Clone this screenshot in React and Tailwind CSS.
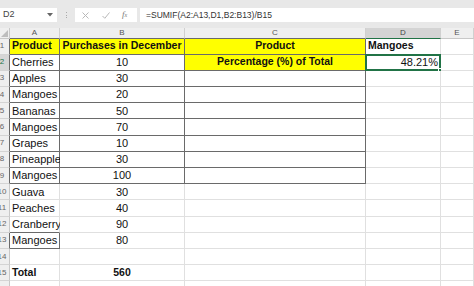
const COLS = [
  { key: 'A', w: 'w-[50px]' },
  { key: 'B', w: 'w-[125px]' },
  { key: 'C', w: 'w-[181px]' },
  { key: 'D', w: 'w-[75px]' },
  { key: 'E', w: 'w-[33px]' },
]

const ROWS = [
  { A: 'Product', B: 'Purchases in December', C: 'Product', D: 'Mangoes' },
  { A: 'Cherries', B: '10', C: 'Percentage (%) of Total', D: '48.21%' },
  { A: 'Apples', B: '30' },
  { A: 'Mangoes', B: '20' },
  { A: 'Bananas', B: '50' },
  { A: 'Mangoes', B: '70' },
  { A: 'Grapes', B: '10' },
  { A: 'Pineapple', B: '30' },
  { A: 'Mangoes', B: '100' },
  { A: 'Guava', B: '30' },
  { A: 'Peaches', B: '40' },
  { A: 'Cranberry', B: '90' },
  { A: 'Mangoes', B: '80' },
  {},
  { A: 'Total', B: '560' },
  {},
]

// cells that carry the dark outline
const boxed = (r, c) => (r >= 1 && r <= 9 && ['A', 'B', 'C'].includes(c)) || (r === 13 && c === 'A')
const yellow = (r, c) => (r === 1 && ['A', 'B', 'C'].includes(c)) || (r === 2 && c === 'C')

function Cell({ r, c, w, value }) {
  const next = COLS[COLS.findIndex((x) => x.key === c) + 1]
  const darkR = boxed(r, c) || (next && boxed(r, next.key))
  const darkB = boxed(r, c) || boxed(r + 1, c)
  const bold = r === 1 || r === 15 || (r === 2 && c === 'C')
  const align =
    c === 'B' || c === 'C' ? 'justify-center' : r === 2 && c === 'D' ? 'justify-end' : 'justify-start'
  return (
    <div
      className={`relative ${w} shrink-0 h-[16.2px] flex items-center px-[2px] border-r border-b whitespace-nowrap overflow-visible ${
        darkR ? 'border-r-[#6a6a6a]' : 'border-r-[#e0e0e0]'
      } ${darkB ? 'border-b-[#6a6a6a]' : 'border-b-[#e0e0e0]'} ${yellow(r, c) ? 'bg-[#ffff00]' : 'bg-white'} ${align} ${
        bold ? 'font-bold text-[10.5px]' : 'text-[11px]'
      } text-[#111]`}
    >
      {value}
      {r === 2 && c === 'D' && (
        <>
          <span className="absolute -left-[1px] -top-[1px] -right-[1px] -bottom-[1px] border-2 border-[#217346] pointer-events-none" />
          <span className="absolute -right-[3px] -bottom-[3px] w-[5px] h-[5px] bg-[#217346] border border-white" />
        </>
      )}
    </div>
  )
}

function RowHeader({ n }) {
  const dark = n <= 9 || n === 13
  const active = n === 2
  return (
    <div
      className={`w-[10px] shrink-0 h-[16.2px] overflow-hidden border-b border-b-[#d4d4d4] border-r ${
        dark ? 'border-r-[#6a6a6a]' : 'border-r-[#c8c8c8]'
      } ${active ? 'bg-[#d6d6d6] text-[#217346]' : 'bg-[#efefef] text-[#666]'} flex items-center`}
    >
      <div className="w-[20px] -ml-[8px] shrink-0 text-center text-[8px] leading-none">{n}</div>
    </div>
  )
}

export default function App() {
  return (
    <div className="w-[474px] h-[286px] overflow-hidden bg-white" style={{ fontFamily: '"Liberation Sans", Arial, sans-serif' }}>
      {/* formula bar */}
      <div className="h-[28px] bg-[#e8e8e8] pt-[8px]">
        <div className="h-[14px] flex items-stretch">
          <div className="w-[57px] bg-white flex items-center justify-between pl-[3px] pr-[4px] text-[9px] text-[#444]">
            <span>D2</span>
            <svg width="6" height="4" viewBox="0 0 6 4"><path d="M0 0h6L3 3.5z" fill="#666" /></svg>
          </div>
          <div className="w-[18px] flex flex-col items-center justify-center gap-[1.5px]">
            <span className="w-[1px] h-[1px] bg-[#aaa]" />
            <span className="w-[1px] h-[1px] bg-[#aaa]" />
            <span className="w-[1px] h-[1px] bg-[#aaa]" />
          </div>
          <div className="w-[62px] bg-white flex items-center">
            <svg className="ml-[7px]" width="7" height="7" viewBox="0 0 7 7" stroke="#b8b8b8" strokeWidth="1">
              <path d="M0.5 0.5l6 6M6.5 0.5l-6 6" />
            </svg>
            <svg className="ml-[13px]" width="8" height="7" viewBox="0 0 8 7" fill="none" stroke="#b8b8b8" strokeWidth="1">
              <path d="M0.5 4l2.3 2.3L7.5 0.5" />
            </svg>
            <span className="ml-[12px] text-[9px] italic text-[#777]" style={{ fontFamily: '"Liberation Serif", serif' }}>
              f<span className="text-[6px]">x</span>
            </span>
          </div>
          <div className="ml-[3px] flex-1 bg-white flex items-center pl-[6px] text-[8.5px] text-[#333]">
            =SUMIF(A2:A13,D1,B2:B13)/B15
          </div>
        </div>
      </div>

      {/* column headers */}
      <div className="flex h-[10.5px]">
        <div className="w-[10px] shrink-0 bg-[#efefef] border-r border-b border-[#c8c8c8] flex items-end justify-end">
          <svg width="7" height="7" viewBox="0 0 7 7" className="mr-[1px] mb-[1px]"><path d="M7 0V7H0z" fill="#bdbdbd" /></svg>
        </div>
        {COLS.map((col) => (
          <div
            key={col.key}
            className={`${col.w} shrink-0 flex items-center justify-center text-[8px] leading-none border-r border-r-[#d0d0d0] border-b ${
              col.key === 'D' ? 'bg-[#d4d4d4] text-[#444]' : 'bg-[#efefef] text-[#555]'
            } ${['A', 'B', 'C'].includes(col.key) ? 'border-b-[#6a6a6a]' : col.key === 'D' ? 'border-b-[#217346]' : 'border-b-[#c8c8c8]'}`}
          >
            {col.key}
          </div>
        ))}
      </div>

      {/* grid */}
      {ROWS.map((row, i) => (
        <div key={i} className="flex">
          <RowHeader n={i + 1} />
          {COLS.map((col) => (
            <Cell key={col.key} r={i + 1} c={col.key} w={col.w} value={row[col.key]} />
          ))}
        </div>
      ))}
    </div>
  )
}
